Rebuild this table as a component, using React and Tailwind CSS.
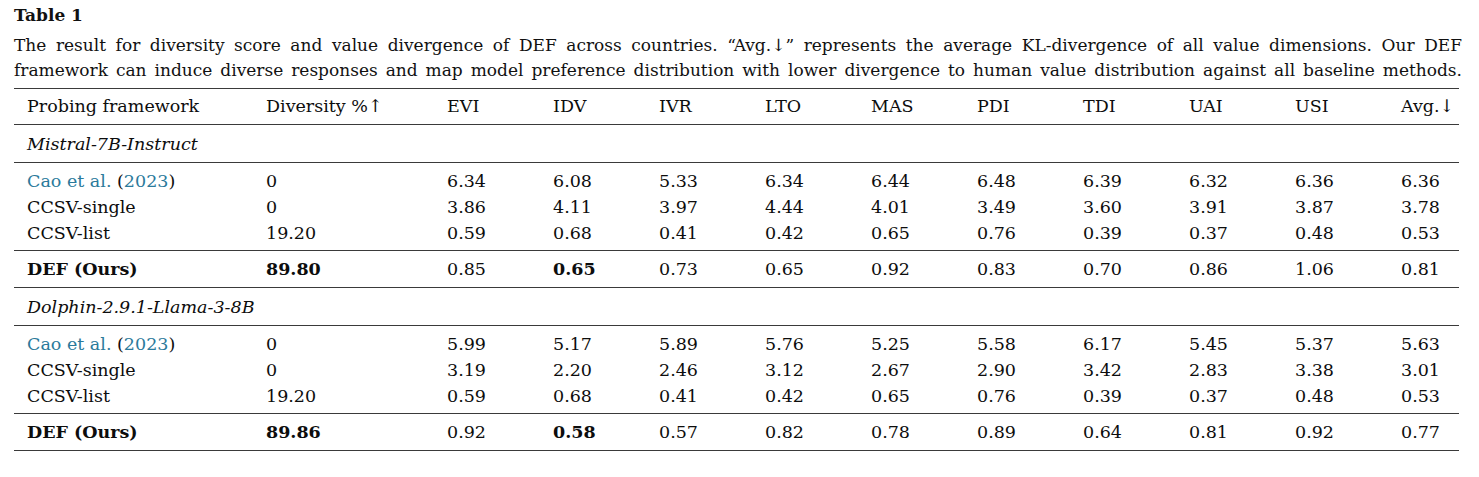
const cols = ['EVI', 'IDV', 'IVR', 'LTO', 'MAS', 'PDI', 'TDI', 'UAI', 'USI', 'Avg.↓'];

const groups = [
  {
    model: 'Mistral-7B-Instruct',
    rows: [
      { name: 'cao', div: '0', vals: ['6.34', '6.08', '5.33', '6.34', '6.44', '6.48', '6.39', '6.32', '6.36', '6.36'] },
      { name: 'CCSV-single', div: '0', vals: ['3.86', '4.11', '3.97', '4.44', '4.01', '3.49', '3.60', '3.91', '3.87', '3.78'] },
      { name: 'CCSV-list', div: '19.20', vals: ['0.59', '0.68', '0.41', '0.42', '0.65', '0.76', '0.39', '0.37', '0.48', '0.53'] },
    ],
    ours: { div: '89.80', vals: ['0.85', '0.65', '0.73', '0.65', '0.92', '0.83', '0.70', '0.86', '1.06', '0.81'], bold: [1] },
  },
  {
    model: 'Dolphin-2.9.1-Llama-3-8B',
    rows: [
      { name: 'cao', div: '0', vals: ['5.99', '5.17', '5.89', '5.76', '5.25', '5.58', '6.17', '5.45', '5.37', '5.63'] },
      { name: 'CCSV-single', div: '0', vals: ['3.19', '2.20', '2.46', '3.12', '2.67', '2.90', '3.42', '2.83', '3.38', '3.01'] },
      { name: 'CCSV-list', div: '19.20', vals: ['0.59', '0.68', '0.41', '0.42', '0.65', '0.76', '0.39', '0.37', '0.48', '0.53'] },
    ],
    ours: { div: '89.86', vals: ['0.92', '0.58', '0.57', '0.82', '0.78', '0.89', '0.64', '0.81', '0.92', '0.77'], bold: [1] },
  },
];

const grid = 'grid grid-cols-[239px_181px_repeat(9,106px)_1fr] pl-[13px]';

function Rule() {
  return <div className="border-t-[1.5px] border-[#3a3a3a]" />;
}

function Cao() {
  return (
    <span>
      <span className="text-[#2b7a9b]">Cao et al.</span> (<span className="text-[#2b7a9b]">2023</span>)
    </span>
  );
}

export default function App() {
  return (
    <div className="bg-white text-[#111] pl-[14px] pr-[17px] pt-[3px] font-['DejaVu_Serif',serif] text-[17px]">
      <div className="font-bold leading-6">Table 1</div>
      <div className="leading-[25px] mt-[6px]">
        <div className="text-justify [text-align-last:justify] whitespace-nowrap">
          The result for diversity score and value divergence of DEF across countries. “Avg.↓” represents the average KL-divergence of all value dimensions. Our DEF
        </div>
        <div className="text-justify [text-align-last:justify] whitespace-nowrap">
          framework can induce diverse responses and map model preference distribution with lower divergence to human value distribution against all baseline methods.
        </div>
      </div>

      <div className="mt-[5px] mr-[3px] text-[17.5px] text-[#0d0d0d]">
        <Rule />
        <div className={`${grid} leading-[26px] pt-[4px] pb-[5px]`}>
          <div>Probing framework</div>
          <div>Diversity %↑</div>
          {cols.map((c) => (
            <div key={c}>{c}</div>
          ))}
        </div>
        <Rule />
        {groups.map((g) => (
          <div key={g.model}>
            <div className={`${grid} leading-[26px] pt-[6px] pb-[5px]`}>
              <div className="italic col-span-3">{g.model}</div>
            </div>
            <Rule />
            <div className="pt-[5px] pb-[4px]">
              {g.rows.map((r) => (
                <div key={r.name} className={`${grid} leading-[26px]`}>
                  <div>{r.name === 'cao' ? <Cao /> : r.name}</div>
                  <div>{r.div}</div>
                  {r.vals.map((v, i) => (
                    <div key={i}>{v}</div>
                  ))}
                </div>
              ))}
            </div>
            <Rule />
            <div className={`${grid} leading-[26px] pt-[5px] pb-[5px]`}>
              <div className="font-bold">DEF (Ours)</div>
              <div className="font-bold">{g.ours.div}</div>
              {g.ours.vals.map((v, i) => (
                <div key={i} className={g.ours.bold.includes(i) ? 'font-bold' : ''}>
                  {v}
                </div>
              ))}
            </div>
            <Rule />
          </div>
        ))}
      </div>
    </div>
  );
}
